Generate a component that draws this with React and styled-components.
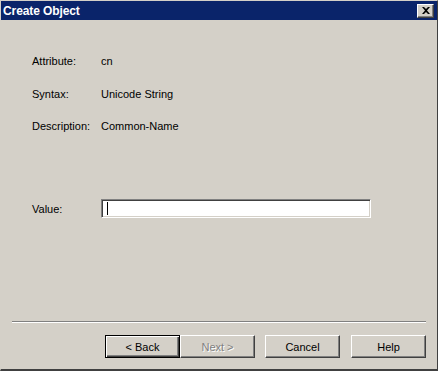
import styled, { createGlobalStyle } from "styled-components";

const Global = createGlobalStyle`
  html, body {
    margin: 0;
    padding: 0;
    background: #d4d0c8;
  }
  * { box-sizing: border-box; }
`;

const Window = styled.div`
  width: 438px;
  height: 371px;
  background: #d4d0c8;
  border-top: 1px solid #d4d0c8;
  border-left: 1px solid #d4d0c8;
  border-right: 1px solid #404040;
  border-bottom: 2px solid #404040;
  display: flex;
  flex-direction: column;
  font-family: "Liberation Sans", Arial, sans-serif;
  font-size: 11px;
  color: #000;
`;

const TitleBar = styled.div`
  height: 19px;
  background: #0a246a;
  display: flex;
  align-items: center;
  justify-content: space-between;
  padding: 0 3px 0 2px;
`;

const Title = styled.span`
  color: #fff;
  font-weight: bold;
  font-size: 12px;
  letter-spacing: -0.1px;
`;

const CloseBtn = styled.div`
  width: 17px;
  height: 14px;
  background: #d4d0c8;
  border-top: 1px solid #fff;
  border-left: 1px solid #fff;
  border-right: 1px solid #404040;
  border-bottom: 1px solid #404040;
  box-shadow: inset -1px -1px 0 #808080;
  display: flex;
  align-items: center;
  justify-content: center;
`;

const Body = styled.div`
  flex: 1;
  display: flex;
  flex-direction: column;
  padding: 35px 0 0 31px;
`;

const InfoRow = styled.div`
  display: grid;
  grid-template-columns: 69px 1fr;
  height: 13px;
  line-height: 13px;
  margin-bottom: ${(p) => p.gap || 0}px;
`;

const ValueRow = styled.div`
  display: grid;
  grid-template-columns: 69px 270px;
  align-items: center;
  margin-top: 66px;
`;

const Input = styled.div`
  height: 19px;
  background: #fff;
  border-top: 1px solid #808080;
  border-left: 1px solid #808080;
  border-right: 1px solid #fff;
  border-bottom: 1px solid #fff;
  box-shadow: inset 1px 1px 0 #404040, inset -1px -1px 0 #d4d0c8;
  display: flex;
  align-items: center;
  padding-left: 5px;
`;

const Caret = styled.span`
  width: 1px;
  height: 13px;
  background: #000;
`;

const Footer = styled.div`
  display: flex;
  flex-direction: column;
  padding: 0 11px 11px 11px;
`;

const Separator = styled.div`
  height: 2px;
  border-top: 1px solid #808080;
  border-bottom: 1px solid #fff;
  margin-bottom: 12px;
`;

const ButtonRow = styled.div`
  display: flex;
  justify-content: flex-end;
  align-items: center;
`;

const Button = styled.div`
  width: 75px;
  height: 23px;
  margin-left: ${(p) => p.ml || 0}px;
  background: #d4d0c8;
  display: flex;
  align-items: center;
  justify-content: center;
  color: ${(p) => (p.disabled ? "#808080" : "#000")};
  text-shadow: ${(p) => (p.disabled ? "1px 1px 0 #fff" : "none")};
  ${(p) =>
    p.default
      ? `border: 1px solid #000;
         box-shadow: inset 1px 1px 0 #fff, inset -1px -1px 0 #404040, inset -2px -2px 0 #808080;`
      : `border-top: 1px solid #fff;
         border-left: 1px solid #fff;
         border-right: 1px solid #404040;
         border-bottom: 1px solid #404040;
         box-shadow: inset -1px -1px 0 #808080;`}
`;

export default function App() {
  return (
    <>
      <Global />
      <Window>
        <TitleBar>
          <Title>Create Object</Title>
          <CloseBtn>
            <svg width="8" height="7" viewBox="0 0 8 7">
              <path d="M0 0h2l2 2 2-2h2L5 3.5 8 7H6L4 5 2 7H0l3-3.5z" fill="#000" />
            </svg>
          </CloseBtn>
        </TitleBar>
        <Body>
          <InfoRow gap={20}>
            <span>Attribute:</span>
            <span>cn</span>
          </InfoRow>
          <InfoRow gap={19}>
            <span>Syntax:</span>
            <span>Unicode String</span>
          </InfoRow>
          <InfoRow>
            <span>Description:</span>
            <span>Common-Name</span>
          </InfoRow>
          <ValueRow>
            <span>Value:</span>
            <Input>
              <Caret />
            </Input>
          </ValueRow>
        </Body>
        <Footer>
          <Separator />
          <ButtonRow>
            <Button default>&lt; Back</Button>
            <Button disabled>Next &gt;</Button>
            <Button ml={10}>Cancel</Button>
            <Button ml={11}>Help</Button>
          </ButtonRow>
        </Footer>
      </Window>
    </>
  );
}
